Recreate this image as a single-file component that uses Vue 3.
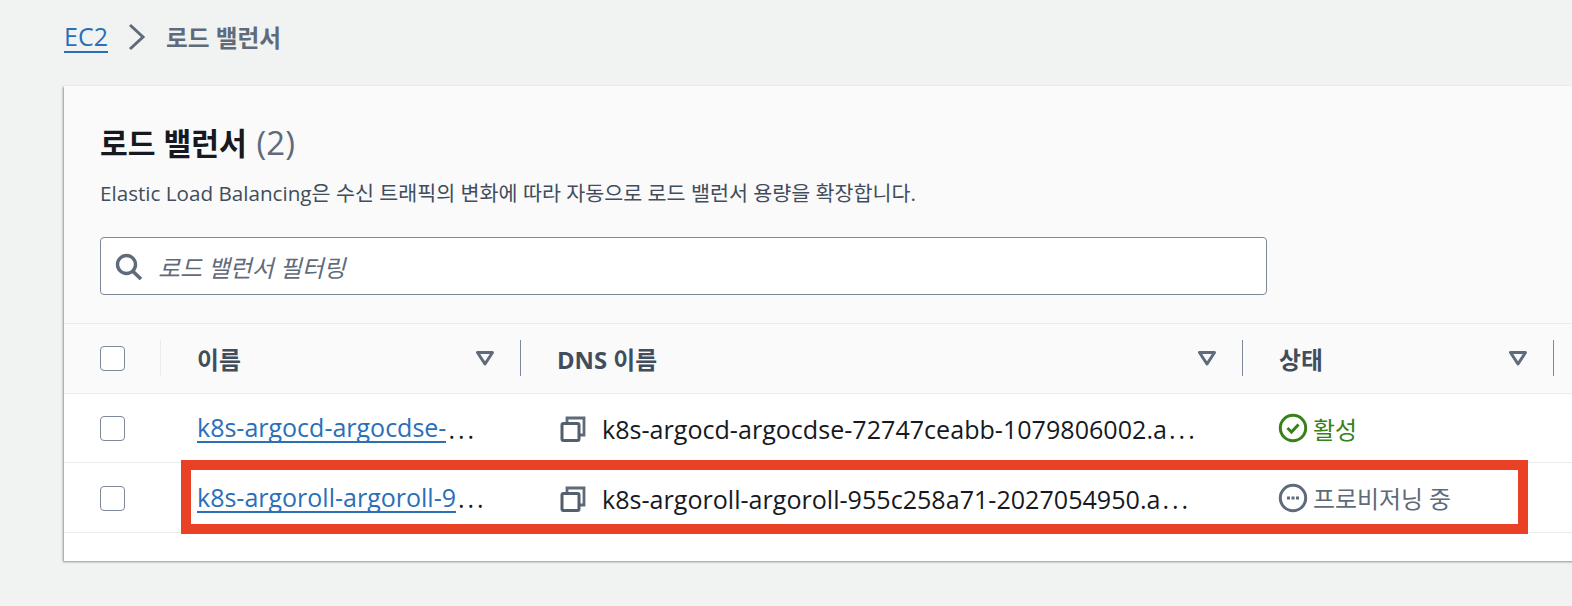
<template>
  <div class="page">
    <!-- breadcrumb -->
    <nav class="crumbs">
      <a class="crumb-link">EC2</a>
      <svg class="crumb-arrow" width="18" height="28" viewBox="0 0 18 28">
        <path d="M2 2 L15 14 L2 26" fill="none" stroke="#5f6b7a" stroke-width="3" />
      </svg>
      <span class="crumb-current">로드 밸런서</span>
    </nav>

    <section class="card">
      <div class="card-head">
        <h1 class="title">로드 밸런서 <span class="count">(2)</span></h1>
        <p class="desc">Elastic Load Balancing은 수신 트래픽의 변화에 따라 자동으로 로드 밸런서 용량을 확장합니다.</p>
        <div class="filter">
          <svg width="28" height="28" viewBox="0 0 28 28">
            <circle cx="12.5" cy="12.5" r="9" fill="none" stroke="#5f6b7a" stroke-width="3.4" />
            <path d="M18.5 19 L27 27" fill="none" stroke="#5f6b7a" stroke-width="3.6" />
          </svg>
          <span class="filter-text">로드 밸런서 필터링</span>
        </div>
      </div>

      <div class="row row-head">
        <div class="cell check-cell"><span class="box"></span></div>
        <div class="cell head-cell" v-for="col in columns" :key="col">
          <span class="head-label">{{ col }}</span>
          <svg class="caret" width="18" height="15" viewBox="0 0 18 15">
            <path d="M1.5 1.5 H16.5 L9 13 Z" fill="none" stroke="#5f6b7a" stroke-width="3" stroke-linejoin="round" />
          </svg>
        </div>
      </div>

      <div class="row data-row" v-for="lb in balancers" :key="lb.name">
        <div class="cell check-cell"><span class="box"></span></div>
        <div class="cell name-cell">
          <a class="name-link">{{ lb.name }}</a><span class="dots">...</span>
        </div>
        <div class="cell dns-cell">
          <svg class="copy" width="26" height="26" viewBox="0 0 26 26">
            <path d="M7 7 V2 H24 V19 H19" fill="none" stroke="#5f6b7a" stroke-width="2.8" />
            <rect x="2" y="7.5" width="17" height="17" rx="1.5" fill="none" stroke="#545f6d" stroke-width="3" />
          </svg>
          <span class="dns-text">{{ lb.dns }}<span class="dots">...</span></span>
        </div>
        <div class="cell status-cell" :class="lb.state">
          <svg v-if="lb.state === 'active'" width="30" height="30" viewBox="0 0 30 30">
            <circle cx="15" cy="15" r="12.7" fill="none" stroke="#37811b" stroke-width="3" />
            <path d="M9.5 15 L13.5 19 L20.5 11.5" fill="none" stroke="#37811b" stroke-width="3" />
          </svg>
          <svg v-else width="30" height="30" viewBox="0 0 30 30">
            <circle cx="15" cy="15" r="12.7" fill="none" stroke="#5f6b7a" stroke-width="3" />
            <path d="M9 13.5 H12 V16.5 H9 Z M13.5 13.5 H16.5 V16.5 H13.5 Z M18 13.5 H21 V16.5 H18 Z" fill="#5f6b7a" />
          </svg>
          <span>{{ lb.status }}</span>
        </div>
      </div>

      <div class="card-foot"></div>

      <!-- red highlight drawn over the second row -->
      <div class="highlight"></div>
    </section>
  </div>
</template>

<script setup>
const columns = ['이름', 'DNS 이름', '상태']

const balancers = [
  {
    name: 'k8s-argocd-argocdse-',
    dns: 'k8s-argocd-argocdse-72747ceabb-1079806002.a',
    state: 'active',
    status: '활성'
  },
  {
    name: 'k8s-argoroll-argoroll-9',
    dns: 'k8s-argoroll-argoroll-955c258a71-2027054950.a',
    state: 'pending',
    status: '프로비저닝 중'
  }
]
</script>

<style>
html,
body {
  background: #f1f3f3;
  overflow: hidden;
}
</style>

<style scoped>
.page {
  width: 1572px;
  height: 606px;
  box-sizing: border-box;
  padding: 0 0 0 64px;
  font-family: "Open Sans", "Noto Sans CJK KR", sans-serif;
  color: #16191f;
  overflow: hidden;
}

.crumbs {
  display: flex;
  align-items: center;
  height: 86px;
  font-size: 25px;
  padding-bottom: 13px;
  box-sizing: border-box;
}

.crumb-link {
  color: #2a6fb8;
  border-bottom: 2px solid #2a6fb8;
  line-height: 30px;
}

.crumb-arrow {
  margin: 0 20px 0 20px;
}

.crumb-current {
  color: #5f6b7a;
  font-weight: 700;
  font-size: 23.7px;
}

.card {
  position: relative;
  width: 1560px;
  background: #fff;
  box-shadow: -1px 1px 2px rgba(70, 85, 100, 0.6);
}

.card-head {
  height: 238px;
  box-sizing: border-box;
  padding: 38px 0 0 36px;
  background: #fafafa;
  border-bottom: 1px solid #e9ebed;
}

.title {
  margin: 0;
  height: 40px;
  font-size: 30.2px;
  line-height: 40px;
  font-weight: 700;
}

.count {
  margin-left: 2px;
  color: #5f6b7a;
  font-size: 33px;
  line-height: 1;
  font-weight: 400;
}

.desc {
  margin: 14px 0 0;
  font-size: 20.65px;
  line-height: 30px;
  color: #414d5c;
}

.filter {
  display: flex;
  align-items: center;
  gap: 16px;
  width: 1167px;
  height: 58px;
  margin-top: 29px;
  box-sizing: border-box;
  padding-left: 13px;
  background: #fff;
  border: 1px solid #7d8998;
  border-radius: 4px;
}

.filter-text {
  font-size: 23.8px;
  font-style: italic;
  color: #5f6b7a;
}

.row {
  display: grid;
  grid-template-columns: 97px 360px 722px 311px 1fr;
  height: 69.5px;
  border-bottom: 1px solid #e9ebed;
  box-sizing: border-box;
}

.row-head {
  background: #fafafa;
}

.cell {
  display: flex;
  align-items: center;
  min-width: 0;
}

.check-cell {
  padding-left: 36px;
}

.data-row .check-cell {
  padding-top: 2px;
}

.box {
  width: 25px;
  height: 25px;
  box-sizing: border-box;
  background: #fff;
  border: 1.5px solid #7d8998;
  border-radius: 4px;
}

.head-cell {
  position: relative;
  justify-content: space-between;
  padding: 0 27px 0 36px;
}

.head-cell::after {
  content: "";
  position: absolute;
  right: 0;
  top: 16px;
  height: 36px;
  width: 1px;
  background: #7d8998;
}

.row-head .check-cell {
  position: relative;
}

.row-head .check-cell::after {
  content: "";
  position: absolute;
  right: 0;
  top: 16px;
  height: 36px;
  width: 1px;
  background: #e9ebed;
}

.head-label {
  font-size: 23.8px;
  font-weight: 700;
  color: #414d5c;
}

.name-cell {
  padding: 2px 0 0 36px;
  font-size: 25px;
  white-space: nowrap;
}

.name-link {
  color: #2a6fb8;
  border-bottom: 2px solid #2a6fb8;
  line-height: 27px;
}

.dots {
  letter-spacing: 3px;
  margin-left: 2px;
}

.dns-cell {
  gap: 16px;
  padding: 3px 0 0 39px;
  font-size: 25.1px;
  white-space: nowrap;
}

.copy {
  flex: none;
}

.status-cell {
  gap: 5px;
  padding: 1px 0 0 35px;
  font-size: 23.9px;
}

.status-cell.active {
  color: #37811b;
}

.status-cell.pending {
  color: #5f6b7a;
}

.card-foot {
  height: 28px;
}

.highlight {
  position: absolute;
  left: 117px;
  top: 374px;
  width: 1347px;
  height: 74px;
  box-sizing: border-box;
  border: 10px solid #ea4025;
}
</style>
